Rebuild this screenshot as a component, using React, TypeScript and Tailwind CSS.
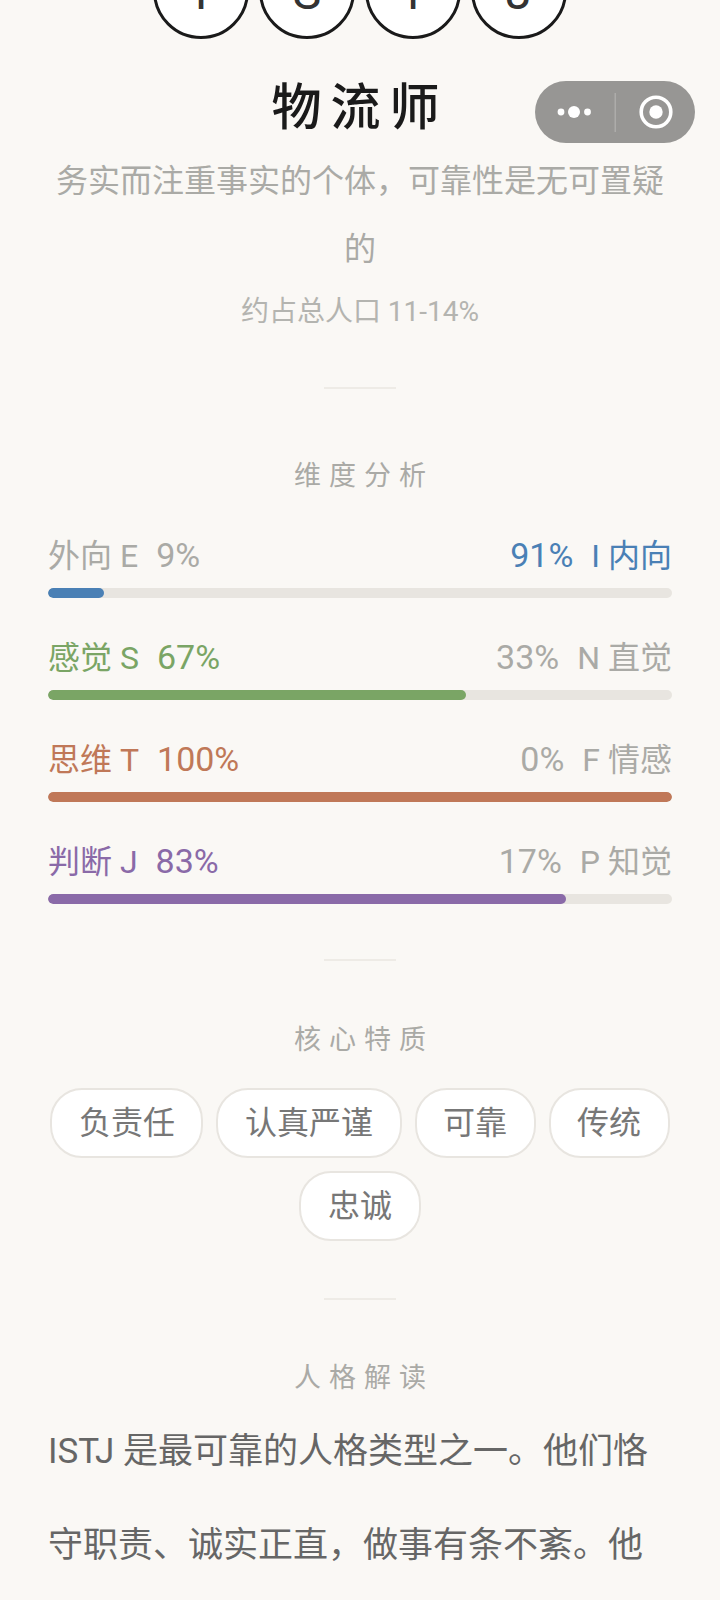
import React from 'react'

const font = "font-['Roboto','Noto_Sans_CJK_SC',sans-serif]"

const dimensions = [
  { left: '外向 E', leftPct: '9%', right: 'I 内向', rightPct: '91%', fill: 9, color: 'bg-[#4a80b5]', text: 'text-[#4a80b5]', side: 'right' },
  { left: '感觉 S', leftPct: '67%', right: 'N 直觉', rightPct: '33%', fill: 67, color: 'bg-[#7aa565]', text: 'text-[#7aa565]', side: 'left' },
  { left: '思维 T', leftPct: '100%', right: 'F 情感', rightPct: '0%', fill: 100, color: 'bg-[#c07858]', text: 'text-[#c07858]', side: 'left' },
  { left: '判断 J', leftPct: '83%', right: 'P 知觉', rightPct: '17%', fill: 83, color: 'bg-[#8a6aa8]', text: 'text-[#8a6aa8]', side: 'left' },
]

const traits = ['负责任', '认真严谨', '可靠', '传统', '忠诚']

function Divider({ className }: { className: string }) {
  return <div className={`mx-auto h-[2px] w-[72px] bg-[#eeebe6] ${className}`} />
}

function SectionTitle({ children, className }: { children: string; className: string }) {
  return (
    <h2 className={`pl-[8px] text-center text-[27px] leading-[40px] tracking-[8px] text-[#aaaaa6] ${className}`}>
      {children}
    </h2>
  )
}

export default function App() {
  return (
    <div className={`relative h-[1600px] w-[720px] overflow-hidden bg-[#faf8f5] px-12 ${font}`}>
      {/* WeChat capsule */}
      <div className="absolute left-[535px] top-[81px] flex h-[62px] w-[160px] items-center rounded-full bg-[#979694]">
        <svg width="160" height="62" viewBox="0 0 160 62" fill="none">
          <circle cx="26" cy="31" r="3.4" fill="#fff" />
          <circle cx="39" cy="31" r="6" fill="#fff" />
          <circle cx="52.5" cy="31" r="3.4" fill="#fff" />
          <rect x="79.5" y="12" width="1.5" height="39" fill="#adacaa" />
          <circle cx="121" cy="31" r="14.8" stroke="#fff" strokeWidth="3.6" />
          <circle cx="121" cy="31" r="6.7" fill="#fff" />
        </svg>
      </div>

      {/* type letters */}
      <div className="-mt-[58px] flex justify-center gap-[10px]">
        {['I', 'S', 'T', 'J'].map((letter) => (
          <div
            key={letter}
            className="flex h-[97px] w-[96px] items-center justify-center rounded-full border-[3px] border-[#1a1a1a] bg-white pt-[4px] text-[48px] text-[#333333]"
          >
            {letter}
          </div>
        ))}
      </div>

      <h1 className="mt-[37px] text-center text-[50px] font-medium leading-[64px] tracking-[9px] text-[#1a1a1a]">物流师</h1>

      <p className="mt-[7px] text-center text-[32px] leading-[68px] text-[#aaaaa6]">
        务实而注重事实的个体，可靠性是无可置疑的
      </p>
      <p className="mt-[9px] text-center text-[28px] leading-[40px] text-[#b4b4b0]">约占总人口 11-14%</p>

      <Divider className="mt-[55px]" />

      <SectionTitle className="mt-[67px]">维度分析</SectionTitle>

      <div className="mt-[36px] flex flex-col gap-[36px]">
        {dimensions.map((d) => (
          <div key={d.left}>
            <div className="flex justify-between text-[32px] leading-[48px] text-[#aaaaa6]">
              <span className={d.side === 'left' ? d.text : ''}>
                {d.left}
                <span className="ml-[18px] text-[34px] leading-[0]">{d.leftPct}</span>
              </span>
              <span className={d.side === 'right' ? d.text : ''}>
                <span className="text-[34px] leading-[0]">{d.rightPct}</span>
                <span className="ml-[18px]">{d.right}</span>
              </span>
            </div>
            <div className="mt-[8px] h-[10px] overflow-hidden rounded-full bg-[#e8e5e0]">
              <div className={`h-full rounded-full ${d.color}`} style={{ width: `${d.fill}%` }} />
            </div>
          </div>
        ))}
      </div>

      <Divider className="mt-[55px]" />

      <SectionTitle className="mt-[59px]">核心特质</SectionTitle>

      <div className="mt-[28px] flex flex-wrap justify-center gap-[13px]">
        {traits.map((t) => (
          <span
            key={t}
            className="flex h-[70px] items-center rounded-[32px] border-2 border-[#e8e5e0] bg-white px-[26.5px] text-[32px] text-[#777777]"
          >
            {t}
          </span>
        ))}
      </div>

      <Divider className="mt-[57px]" />

      <SectionTitle className="mt-[58px]">人格解读</SectionTitle>

      <p className="mt-[7px] text-[35px] leading-[94px] text-[#666666]">
        ISTJ 是最可靠的人格类型之一。他们恪守职责、诚实正直，做事有条不紊。他
      </p>
    </div>
  )
}
